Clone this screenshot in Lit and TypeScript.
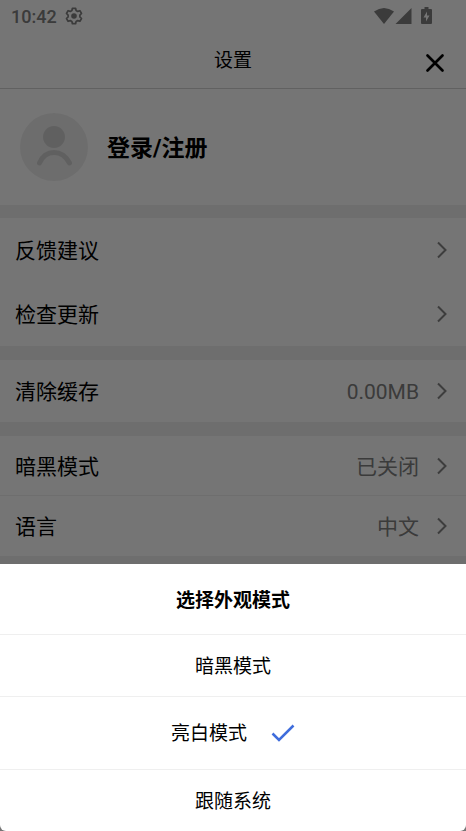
import { LitElement, html, css } from "lit";
import { customElement, property, state } from "lit/decorators.js";

const chevron = html`<svg class="chevron" width="10" height="18" viewBox="0 0 10 18" aria-hidden="true">
  <path d="M1 1.500 8.500 9 1 16.500" fill="none" stroke="currentColor" stroke-width="2" />
</svg>`;

@customElement("settings-row")
export class SettingsRow extends LitElement {
  @property() label = "";
  @property() value = "";

  static styles = css`
    :host {
      display: flex;
      box-sizing: border-box;
    }
    .row {
      flex: 1;
      display: flex;
      align-items: center;
      gap: 18px;
      padding: 0 19px 0 15px;
      border: 0;
      background: none;
      color: #000;
      font: inherit;
      text-align: left;
    }
    .label {
      flex: 1;
      padding-top: 2px;
    }
    .value {
      padding-top: 2px;
      color: #808080;
    }
    .chevron {
      color: #858585;
    }
  `;

  render() {
    return html`<button class="row" type="button">
      <span class="label">${this.label}</span>
      <span class="value">${this.value}</span>
      ${chevron}
    </button>`;
  }
}

@customElement("app-root")
export class AppRoot extends LitElement {
  @state() private mode = "亮白模式";

  static styles = css`
    :host {
      display: block;
      min-height: 100vh;
      background: #fff;
      color: #000;
      font-family: Roboto, "Noto Sans CJK SC", sans-serif;
      font-size: 21px;
      line-height: 28px;
    }
    .status {
      display: flex;
      align-items: center;
      gap: 8px;
      height: 32px;
      padding: 0 34px 0 11px;
      color: #808080;
      font-size: 18px;
      font-weight: 500;
    }
    .time {
      padding-top: 2px;
    }
    .icons {
      display: flex;
      align-items: center;
      margin-left: auto;
    }
    .battery {
      margin-left: 9px;
    }
    .header {
      display: grid;
      grid-template-columns: 1fr auto 1fr;
      align-items: center;
      height: 56px;
      padding: 0 21px;
      border-bottom: 1px solid #d4d4d4;
    }
    .header h1 {
      grid-column: 2;
      margin: 0;
      padding-top: 2px;
      font-size: 19px;
      font-weight: 400;
    }
    .close {
      justify-self: end;
      display: flex;
      padding: 6px 0 0;
      border: 0;
      background: none;
      color: #000;
    }
    .profile {
      display: flex;
      align-items: center;
      gap: 19px;
      width: 100%;
      height: 116px;
      padding: 0 20px;
      border: 0;
      background: none;
      color: #000;
      font: inherit;
      font-size: 23px;
      font-weight: 700;
    }
    .profile span {
      padding-top: 4px;
    }
    .group {
      border-top: 13px solid #f0f0f0;
    }
    .group + .group {
      border-top-width: 14px;
    }
    .group settings-row {
      height: 64px;
    }
    .group.single settings-row {
      height: 62px;
    }
    .group.compact settings-row {
      height: 60px;
    }
    .group.compact settings-row:first-child {
      border-bottom: 1px solid #f0f0f0;
    }
    .overlay {
      position: fixed;
      inset: 0;
      display: flex;
      flex-direction: column;
      justify-content: flex-end;
      background: rgba(0, 0, 0, 0.54);
    }
    .sheet {
      background: #fff;
      border-radius: 0 0 6px 6px;
      font-size: 19px;
      text-align: center;
    }
    .sheet h2 {
      margin: 0;
      padding: 23px 0 19px;
      font-size: 19px;
      font-weight: 700;
    }
    .option {
      display: flex;
      align-items: center;
      justify-content: center;
      gap: 24px;
      width: 100%;
      height: 62px;
      padding: 0;
      border: 0;
      border-top: 1px solid #efefef;
      background: none;
      color: #000;
      font: inherit;
    }
    .option span {
      padding-top: 2px;
    }
    .option.selected {
      height: 73px;
    }
    .check {
      color: #3f6ddc;
    }
  `;

  render() {
    return html`
      <div class="status">
        <span class="time">10:42</span>
        <svg width="18" height="18" viewBox="0 0 18 18" fill="none" stroke="currentColor" aria-hidden="true">
          <path
            d="M7.4 1.3h3.2l.5 2.2 1.6.9 2.2-.7 1.6 2.8-1.6 1.6v1.8l1.6 1.6-1.6 2.8-2.2-.7-1.6.9-.5 2.2H7.4l-.5-2.2-1.6-.9-2.2.7-1.6-2.8 1.6-1.6V8.1L1.500 6.500l1.600-2.800 2.200.7 1.600-.9z"
            stroke-width="1.700"
            stroke-linejoin="round"
          />
          <circle cx="9" cy="9" r="2.800" fill="currentColor" stroke="none" />
        </svg>
        <span class="icons">
          <svg width="20" height="18" viewBox="0 0 20 18" fill="currentColor" aria-hidden="true">
            <path d="M0 4.600Q10-2.800 20 4.600L10 17z" />
          </svg>
          <svg width="18" height="18" viewBox="0 0 18 18" fill="currentColor" aria-hidden="true">
            <path d="M17.500 1v16H1.500z" />
          </svg>
          <svg class="battery" width="11" height="18" viewBox="0 0 11 18" aria-hidden="true">
            <path d="M3.500 0h4v2H10q1 0 1 1v13q0 1-1 1H1q-1 0-1-1V3q0-1 1-1h2.500z" fill="currentColor" />
            <path d="M6 4.500 2.500 10.500H5V14.500L8.500 8.500H6z" fill="#fff" />
          </svg>
        </span>
      </div>
      <header class="header">
        <h1>设置</h1>
        <button class="close" type="button" aria-label="关闭">
          <svg width="20" height="20" viewBox="0 0 20 20" aria-hidden="true">
            <path
              d="M2.500 2.500 17.500 17.500M17.500 2.500 2.500 17.500"
              stroke="currentColor"
              stroke-width="2.700"
              stroke-linecap="round"
            />
          </svg>
        </button>
      </header>
      <main>
        <button class="profile" type="button">
          <svg width="68" height="68" viewBox="0 0 68 68" aria-hidden="true">
            <circle cx="34" cy="34" r="34" fill="#eee" />
            <circle cx="34" cy="24" r="11" fill="#d2d2d2" />
            <path
              d="M19.500 50Q24 39.500 34 39.500T49.500 50"
              fill="none"
              stroke="#d2d2d2"
              stroke-width="5"
              stroke-linecap="round"
            />
          </svg>
          <span>登录/注册</span>
        </button>
        <section class="group">
          <settings-row label="反馈建议"></settings-row>
          <settings-row label="检查更新"></settings-row>
        </section>
        <section class="group single">
          <settings-row label="清除缓存" value="0.00MB"></settings-row>
        </section>
        <section class="group compact">
          <settings-row label="暗黑模式" value="已关闭"></settings-row>
          <settings-row label="语言" value="中文"></settings-row>
        </section>
        <div class="group"></div>
      </main>
      <div class="overlay">
        <section class="sheet" role="dialog" aria-labelledby="sheet-title">
          <h2 id="sheet-title">选择外观模式</h2>
          ${["暗黑模式", "亮白模式", "跟随系统"].map(
            (name) => html`<button
              class="option ${name === this.mode ? "selected" : ""}"
              type="button"
              aria-pressed=${name === this.mode}
              @click=${() => (this.mode = name)}
            >
              <span>${name}</span>
              ${name === this.mode
                ? html`<svg class="check" width="24" height="20" viewBox="0 0 24 20" aria-hidden="true">
                    <path d="M1.500 10.500 8 17 22.500 2.500" fill="none" stroke="currentColor" stroke-width="2.500" />
                  </svg>`
                : ""}
            </button>`
          )}
        </section>
      </div>
    `;
  }
}
